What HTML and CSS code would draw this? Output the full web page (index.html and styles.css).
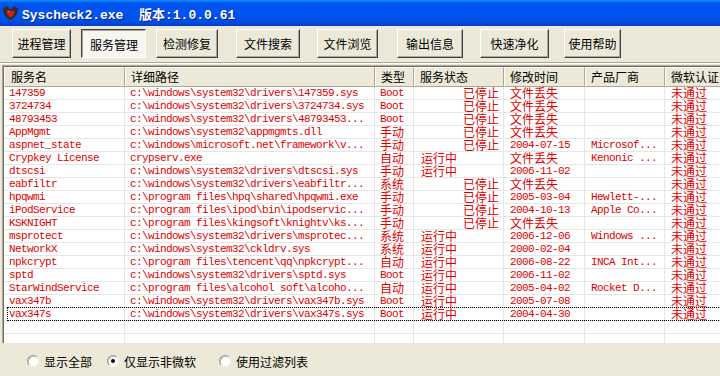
FILE: index.html
```html
<!DOCTYPE html>
<html>
<head>
<meta charset="utf-8">
<link rel="stylesheet" href="styles.css">
</head>
<body>
<div class="titlebar">
  <svg class="ticon" width="17" height="16" viewBox="0 0 17 16">
    <path d="M0.5 3.5 L5 1 L8.5 4.5 L12 1 L16.5 3.5 L14.5 10.5 L8.5 15.5 L2.5 10.5 Z" fill="#2e2e2e"/>
    <path d="M8.5 7 C7 4.3 3.6 5.3 5 8.8 L8.5 12.8 L12 8.8 C13.4 5.3 10 4.3 8.5 7 Z" fill="#e01818"/>
    <path d="M5.9 7 C6.3 6.1 7.2 6.1 7.7 6.8" stroke="#ff9a9a" stroke-width="0.9" fill="none"/>
  </svg>
  <span class="ttext">Syscheck2.exe  版本:1.0.0.61</span>
</div>
<div class="toolbar">
  <div class="btn">进程管理</div>
  <div class="btn pressed">服务管理</div>
  <div class="btn">检测修复</div>
  <div class="btn">文件搜索</div>
  <div class="btn">文件浏览</div>
  <div class="btn">输出信息</div>
  <div class="btn">快速净化</div>
  <div class="btn">使用帮助</div>
</div>
<div class="sep"></div>
<div class="list">
  <div class="list-in">
    <div class="hdr">
      <div class="h">服务名</div>
      <div class="h">详细路径</div>
      <div class="h">类型</div>
      <div class="h">服务状态</div>
      <div class="h">修改时间</div>
      <div class="h">产品厂商</div>
      <div class="h">微软认证</div>
    </div>
    <div class="row"><div>147359</div><div>c:\windows\system32\drivers\147359.sys</div><div>Boot</div><div class="c stop">已停止</div><div class="c">文件丢失</div><div></div><div class="c">未通过</div></div>
    <div class="row"><div>3724734</div><div>c:\windows\system32\drivers\3724734.sys</div><div>Boot</div><div class="c stop">已停止</div><div class="c">文件丢失</div><div></div><div class="c">未通过</div></div>
    <div class="row"><div>48793453</div><div>c:\windows\system32\drivers\48793453...</div><div>Boot</div><div class="c stop">已停止</div><div class="c">文件丢失</div><div></div><div class="c">未通过</div></div>
    <div class="row"><div>AppMgmt</div><div>c:\windows\system32\appmgmts.dll</div><div class="c">手动</div><div class="c stop">已停止</div><div class="c">文件丢失</div><div></div><div class="c">未通过</div></div>
    <div class="row"><div>aspnet_state</div><div>c:\windows\microsoft.net\framework\v...</div><div class="c">手动</div><div class="c stop">已停止</div><div>2004-07-15</div><div>Microsof...</div><div class="c">未通过</div></div>
    <div class="row"><div>Crypkey License</div><div>crypserv.exe</div><div class="c">自动</div><div class="c run">运行中</div><div class="c">文件丢失</div><div>Kenonic ...</div><div class="c">未通过</div></div>
    <div class="row"><div>dtscsi</div><div>c:\windows\system32\drivers\dtscsi.sys</div><div class="c">手动</div><div class="c run">运行中</div><div>2006-11-02</div><div></div><div class="c">未通过</div></div>
    <div class="row"><div>eabfiltr</div><div>c:\windows\system32\drivers\eabfiltr...</div><div class="c">系统</div><div class="c stop">已停止</div><div class="c">文件丢失</div><div></div><div class="c">未通过</div></div>
    <div class="row"><div>hpqwmi</div><div>c:\program files\hpq\shared\hpqwmi.exe</div><div class="c">手动</div><div class="c stop">已停止</div><div>2005-03-04</div><div>Hewlett-...</div><div class="c">未通过</div></div>
    <div class="row"><div>iPodService</div><div>c:\program files\ipod\bin\ipodservic...</div><div class="c">手动</div><div class="c stop">已停止</div><div>2004-10-13</div><div>Apple Co...</div><div class="c">未通过</div></div>
    <div class="row"><div>KSKNIGHT</div><div>c:\program files\kingsoft\knightv\ks...</div><div class="c">手动</div><div class="c stop">已停止</div><div class="c">文件丢失</div><div></div><div class="c">未通过</div></div>
    <div class="row"><div>msprotect</div><div>c:\windows\system32\drivers\msprotec...</div><div class="c">系统</div><div class="c run">运行中</div><div>2006-12-06</div><div>Windows ...</div><div class="c">未通过</div></div>
    <div class="row"><div>NetworkX</div><div>c:\windows\system32\ckldrv.sys</div><div class="c">系统</div><div class="c run">运行中</div><div>2000-02-04</div><div></div><div class="c">未通过</div></div>
    <div class="row"><div>npkcrypt</div><div>c:\program files\tencent\qq\npkcrypt...</div><div class="c">自动</div><div class="c run">运行中</div><div>2006-08-22</div><div>INCA Int...</div><div class="c">未通过</div></div>
    <div class="row"><div>sptd</div><div>c:\windows\system32\drivers\sptd.sys</div><div>Boot</div><div class="c run">运行中</div><div>2006-11-02</div><div></div><div class="c">未通过</div></div>
    <div class="row"><div>StarWindService</div><div>c:\program files\alcohol soft\alcoho...</div><div class="c">自动</div><div class="c run">运行中</div><div>2005-04-02</div><div>Rocket D...</div><div class="c">未通过</div></div>
    <div class="row"><div>vax347b</div><div>c:\windows\system32\drivers\vax347b.sys</div><div>Boot</div><div class="c run">运行中</div><div>2005-07-08</div><div></div><div class="c">未通过</div></div>
    <div class="row focus"><div>vax347s</div><div>c:\windows\system32\drivers\vax347s.sys</div><div>Boot</div><div class="c run">运行中</div><div>2004-04-30</div><div></div><div class="c">未通过</div></div>
    <div class="row"><div></div><div></div><div></div><div></div><div></div><div></div><div></div></div>
    <div class="row"><div></div><div></div><div></div><div></div><div></div><div></div><div></div></div>
  </div>
</div>
<div class="panel">
  <label class="radio"><span class="rb"></span>显示全部</label>
  <label class="radio"><span class="rb on"></span>仅显示非微软</label>
  <label class="radio"><span class="rb"></span>使用过滤列表</label>
</div>
</body>
</html>
```

FILE: styles.css
```css
html, body {
  margin: 0;
  padding: 0;
}
body {
  width: 720px;
  height: 376px;
  overflow: hidden;
  background: #ece9d8;
  font-family: "Noto Sans CJK SC", "Liberation Sans", sans-serif;
  font-size: 12px;
  color: #000;
  display: flex;
  flex-direction: column;
}

.titlebar {
  flex: none;
  height: 26px;
  box-sizing: border-box;
  display: flex;
  align-items: center;
  padding-left: 2px;
  gap: 3px;
  background: linear-gradient(to bottom, #0997ff 0px, #0053ee 3px, #0050ee 6px, #0055f0 12px, #0051e6 20px, #0047d6 24px, #003cc0 26px);
}
.ticon {
  flex: none;
}
.ttext {
  white-space: pre;
  color: #fff;
  font-family: "Liberation Mono", "Noto Sans CJK SC", monospace;
  font-weight: bold;
  font-size: 13px;
  text-shadow: 1px 1px 0 #0a1e8c;
}

.toolbar {
  flex: none;
  height: 36px;
  box-sizing: border-box;
  display: flex;
  align-items: flex-start;
  padding: 3px 0 0 12px;
}
.btn {
  flex: none;
  height: 29px;
  box-sizing: border-box;
  display: flex;
  align-items: center;
  justify-content: center;
  background: #ece9d8;
  border-top: 1px solid #fff;
  border-left: 1px solid #fff;
  border-right: 1px solid #404040;
  border-bottom: 1px solid #404040;
  box-shadow: inset -1px -1px 0 #aca899;
  font-size: 12px;
}
.btn.pressed {
  background: #f6f5f0;
  border-top: 1px solid #404040;
  border-left: 1px solid #404040;
  border-right: 1px solid #fff;
  border-bottom: 1px solid #fff;
  box-shadow: inset 1px 1px 0 #aca899;
  padding: 1px 0 0 1px;
}
.btn:nth-child(1) { width: 59px; }
.btn:nth-child(2) { width: 65px; margin-left: 10px; }
.btn:nth-child(3) { width: 62px; margin-left: 10px; }
.btn:nth-child(4) { width: 64px; margin-left: 18px; }
.btn:nth-child(5) { width: 61px; margin-left: 17px; }
.btn:nth-child(6) { width: 66px; margin-left: 19px; }
.btn:nth-child(7) { width: 69px; margin-left: 17px; }
.btn:nth-child(8) { width: 57px; margin-left: 15px; }

.sep {
  flex: none;
  height: 0;
  border-top: 1px solid #aca899;
  border-bottom: 1px solid #fff;
  margin-bottom: 1px;
}

.list {
  flex: none;
  height: 278px;
  margin-left: 2px;
  box-sizing: border-box;
  border-top: 1px solid #aca899;
  border-left: 1px solid #aca899;
  background: #fff;
  overflow: hidden;
}
.list-in {
  height: 100%;
  box-sizing: border-box;
  border-top: 1px solid #716f64;
  border-left: 1px solid #716f64;
}

.hdr, .row {
  display: grid;
  grid-template-columns: 121px 250px 39px 90px 81px 80px 80px;
  width: 741px;
}
.hdr {
  height: 20px;
}
.h {
  box-sizing: border-box;
  height: 20px;
  background: #ece9d8;
  border-top: 1px solid #fff;
  border-left: 1px solid #fff;
  border-right: 1px solid #aca899;
  border-bottom: 1px solid #aca899;
  padding-left: 5px;
  line-height: 18px;
  font-size: 12px;
  white-space: nowrap;
}
.h:first-child {
  padding-left: 6px;
}

.row {
  height: 13px;
  color: #e00000;
  font-family: "Liberation Mono", monospace;
  font-size: 11px;
  letter-spacing: -0.6px;
}
.row > div {
  box-sizing: border-box;
  height: 13px;
  border-right: 1px solid #e6e6e6;
  border-bottom: 1px solid #e6e6e6;
  padding-left: 6px;
  line-height: 12px;
  white-space: nowrap;
}
.row > div:nth-child(1),
.row > div:nth-child(2),
.row > div:nth-child(3) {
  padding-left: 5px;
}
.row > .c {
  font-family: "Noto Sans CJK SC", sans-serif;
  font-size: 12px;
  line-height: 12px;
  letter-spacing: 0;
}
.row > .stop {
  padding-left: 49px;
}
.row > .run {
  padding-left: 7px;
}
.row.focus {
  position: relative;
}
.row.focus::after {
  content: "";
  position: absolute;
  left: 3px;
  top: -1px;
  right: 0;
  bottom: 0;
  border: 1px dotted #000;
}

.panel {
  flex: 1;
  display: flex;
  align-items: center;
  padding: 3px 0 0 27px;
}
.radio {
  display: flex;
  align-items: center;
  gap: 5px;
  font-size: 12px;
}
.radio:nth-child(2) { margin-left: 15px; }
.radio:nth-child(3) { margin-left: 23px; }
.rb {
  width: 12px;
  height: 12px;
  box-sizing: border-box;
  border-radius: 50%;
  background: #fff;
  border: 1px solid;
  border-color: #9d9a8c #f4f3ee #f4f3ee #9d9a8c;
  box-shadow: inset 1px 1px 0 #c9c6b8;
  display: flex;
  align-items: center;
  justify-content: center;
}
.rb.on::after {
  content: "";
  width: 4px;
  height: 4px;
  border-radius: 50%;
  background: #000;
}
```
